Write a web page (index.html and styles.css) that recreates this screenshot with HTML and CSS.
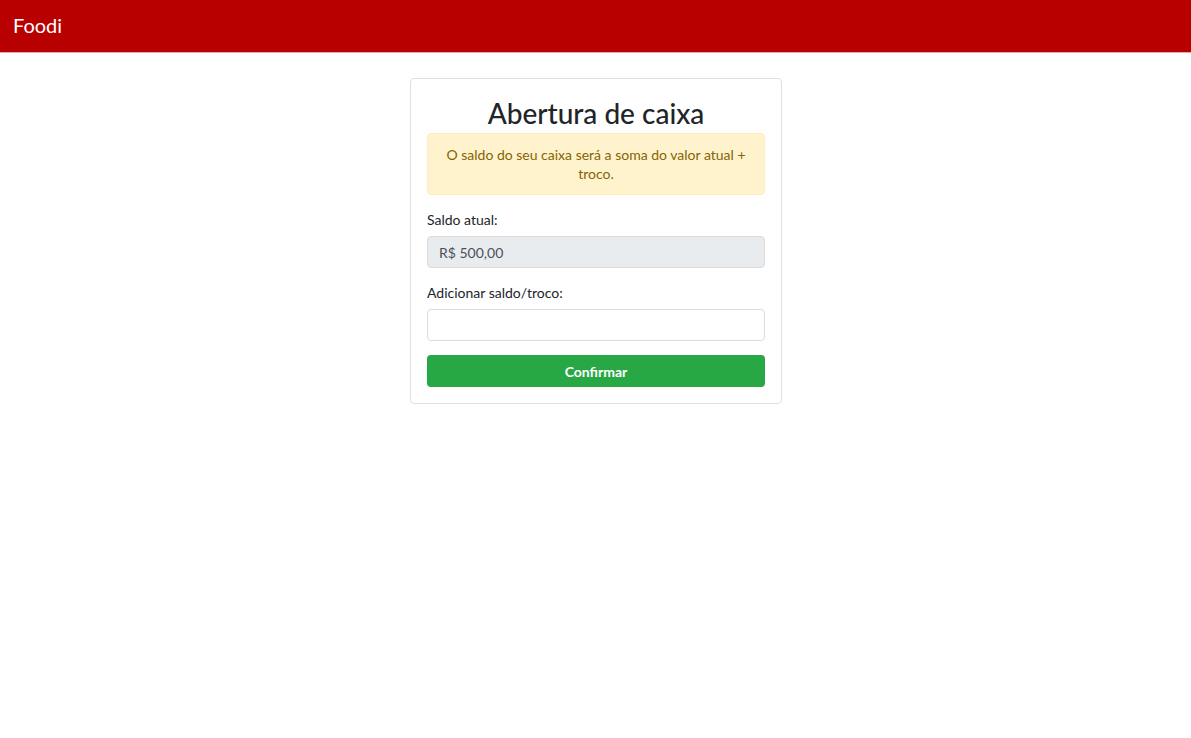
FILE: index.html
```html
<!DOCTYPE html>
<html lang="pt-BR">
<head>
<meta charset="utf-8">
<title>Foodi</title>
<link rel="stylesheet" href="styles.css">
</head>
<body>
<nav class="navbar"><span class="brand">Foodi</span></nav>
<main class="page">
  <section class="card">
    <h3 class="title">Abertura de caixa</h3>
    <div class="alert">O saldo do seu caixa será a soma do valor atual + troco.</div>
    <div class="group">
      <label class="label">Saldo atual:</label>
      <input class="input" type="text" value="R$ 500,00" disabled>
    </div>
    <div class="group">
      <label class="label">Adicionar saldo/troco:</label>
      <input class="input" type="text">
    </div>
    <button class="btn">Confirmar</button>
  </section>
</main>
</body>
</html>
```
FILE: styles.css
```css
* { box-sizing: border-box; }
body {
  margin: 0;
  font-family: "Lato", "Noto Sans", sans-serif;
  color: #212529;
  background: #fff;
  font-size: 14px;
}
.navbar {
  height: 53px;
  background: #b80000;
  border-bottom: 1px solid #e9a9a9;
  display: flex;
  align-items: center;
  padding: 0 13px 2px;
}
.brand {
  color: #fff;
  font-size: 20px;
}
.page {
  display: flex;
  justify-content: center;
  padding-top: 25px;
}
.card {
  width: 372px;
  border: 1px solid #dfdfdf;
  border-radius: 4px;
  padding: 16px;
  margin-left: 1px;
}
.title {
  margin: 0 0 2px;
  text-align: center;
  font-size: 28px;
  font-weight: 500;
  line-height: 36px;
}
.alert {
  background: #fff3cd;
  color: #856404;
  border: 1px solid #ffeeba;
  border-radius: 4px;
  padding: 11px 12px;
  text-align: center;
  line-height: 19px;
  margin-bottom: 14px;
}
.group { margin-bottom: 14px; }
.label {
  display: block;
  line-height: 21px;
  margin-bottom: 6px;
}
.input {
  display: block;
  width: 100%;
  height: 32px;
  border: 1px solid #dcdcdc;
  border-radius: 4px;
  padding: 0 11px;
  font: inherit;
  color: #495057;
  background: #fff;
}
.input:disabled { background: #e9ecef; }
.btn {
  display: block;
  width: 100%;
  height: 32px;
  border: none;
  border-radius: 4px;
  background: #28a745;
  color: #fff;
  font: inherit;
  font-weight: 700;
}
```
